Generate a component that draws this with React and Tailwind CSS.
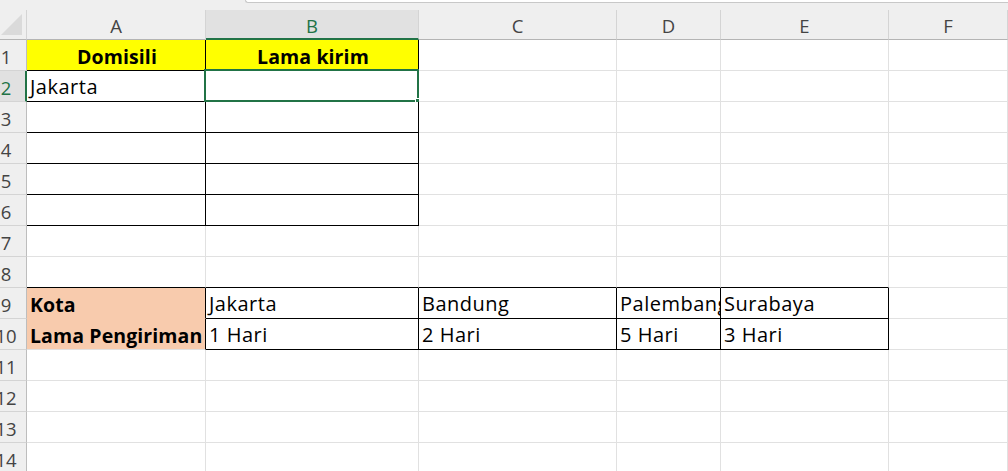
import React from 'react';

const COLS = [
  { key: 'A', w: 'w-[179px]' },
  { key: 'B', w: 'w-[213px]' },
  { key: 'C', w: 'w-[198px]' },
  { key: 'D', w: 'w-[104px]' },
  { key: 'E', w: 'w-[168px]' },
  { key: 'F', w: 'flex-1' },
];

const CELLS = {
  A1: { text: 'Domisili', bold: true, center: true, fill: 'bg-[#ffff00]' },
  B1: { text: 'Lama kirim', bold: true, center: true, fill: 'bg-[#ffff00]' },
  A2: { text: 'Jakarta' },
  A9: { text: 'Kota', bold: true, fill: 'bg-[#f8cbad]' },
  B9: { text: 'Jakarta' },
  C9: { text: 'Bandung' },
  D9: { text: 'Palembang' },
  E9: { text: 'Surabaya' },
  A10: { text: 'Lama Pengiriman', bold: true, fill: 'bg-[#f8cbad]' },
  B10: { text: '1 Hari' },
  C10: { text: '2 Hari' },
  D10: { text: '5 Hari' },
  E10: { text: '3 Hari' },
};

const ROWS = Array.from({ length: 14 }, (_, i) => i + 1);

function inFirst(c) {
  return c === 'A' || c === 'B';
}

function inSecond(c) {
  return c === 'A' || c === 'B' || c === 'C' || c === 'D' || c === 'E';
}

function Cell({ row, col }) {
  const id = col.key + row;
  const data = CELLS[id] || {};
  const c = col.key;

  const rightBlack = (row <= 6 && inFirst(c)) || ((row === 9 || row === 10) && inSecond(c));
  let bottom = 'border-b-[#e1e1e1]';
  if ((row <= 6 && inFirst(c)) || (row === 8 && inSecond(c)) || ((row === 9 || row === 10) && inSecond(c) && c !== 'A')) {
    bottom = 'border-b-black';
  } else if (row === 9 && c === 'A') {
    bottom = 'border-b-[#f8cbad]';
  }
  const right = rightBlack ? 'border-r-black' : 'border-r-[#e1e1e1]';
  const selected = id === 'B2';

  return (
    <div
      className={`relative h-full shrink-0 border-r border-b ${right} ${bottom} ${col.w} ${data.fill || 'bg-white'}`}
    >
      {data.text && (
        <div
          className={`h-full overflow-hidden whitespace-nowrap pl-[3px] pr-[1px] text-black ${data.bold ? 'pt-[2px] text-[19.5px] leading-[30px] font-bold tracking-[0.1px]' : 'pt-[1px] text-[20px] leading-[30px] font-normal tracking-[0.5px]'} ${data.center ? 'text-center' : 'text-left'}`}
        >
          {data.text}
        </div>
      )}
      {selected && (
        <>
          <div className="pointer-events-none absolute -left-[2px] -top-[2px] -right-[1px] -bottom-[1px] border-2 border-[#217346]" />
          <div className="absolute -right-[4px] -bottom-[4px] h-[6px] w-[6px] bg-[#217346] outline outline-1 outline-white" />
        </>
      )}
    </div>
  );
}

function RowHeader({ row }) {
  const active = row === 2;
  return (
    <div
      className={`h-full w-[27px] shrink-0 overflow-hidden border-b border-b-[#d4d4d4] ${active ? 'border-r-2 border-r-[#217346] bg-[#e1e1e1] text-[#217346]' : 'border-r border-r-[#bdbdbd] bg-[#efefef] text-[#444444]'}`}
    >
      <div className="-ml-[14px] w-[40px] pt-[2px] text-center text-[18.5px] leading-[29px]">{row}</div>
    </div>
  );
}

function ColumnHeader() {
  return (
    <div className="flex h-[30px]">
      <div className="flex w-[27px] shrink-0 items-end border-r border-b border-r-[#d4d4d4] border-b-[#b4b4b4] bg-[#efefef]">
        <svg width="26" height="30" viewBox="0 0 26 30" className="block">
          <polygon points="1,26 22,26 22,5" fill="#dadada" />
        </svg>
      </div>
      {COLS.map((col) => {
        const active = col.key === 'B';
        return (
          <div
            key={col.key}
            className={`shrink-0 border-r border-r-[#d4d4d4] pt-[1px] text-center text-[18.5px] leading-[29px] ${col.w} ${active ? 'border-b-2 border-b-[#217346] bg-[#e1e1e1] text-[#217346]' : 'border-b border-b-[#b4b4b4] bg-[#efefef] text-[#444444]'}`}
          >
            {col.key}
          </div>
        );
      })}
    </div>
  );
}

export default function App() {
  return (
    <div className="h-[471px] w-[1008px] overflow-hidden bg-white font-['Open_Sans','Liberation_Sans',sans-serif]">
      {/* strip under the formula bar */}
      <div className="flex h-[10px] bg-[#efefef]">
        <div className="w-[245px] shrink-0" />
        <div className="h-[3px] flex-1 rounded-bl-[3px] border-b border-l border-[#c8c8c8] bg-white" />
      </div>
      <ColumnHeader />
      {ROWS.map((row) => (
        <div key={row} className="flex h-[31px]">
          <RowHeader row={row} />
          {COLS.map((col) => (
            <Cell key={col.key} row={row} col={col} />
          ))}
        </div>
      ))}
    </div>
  );
}
